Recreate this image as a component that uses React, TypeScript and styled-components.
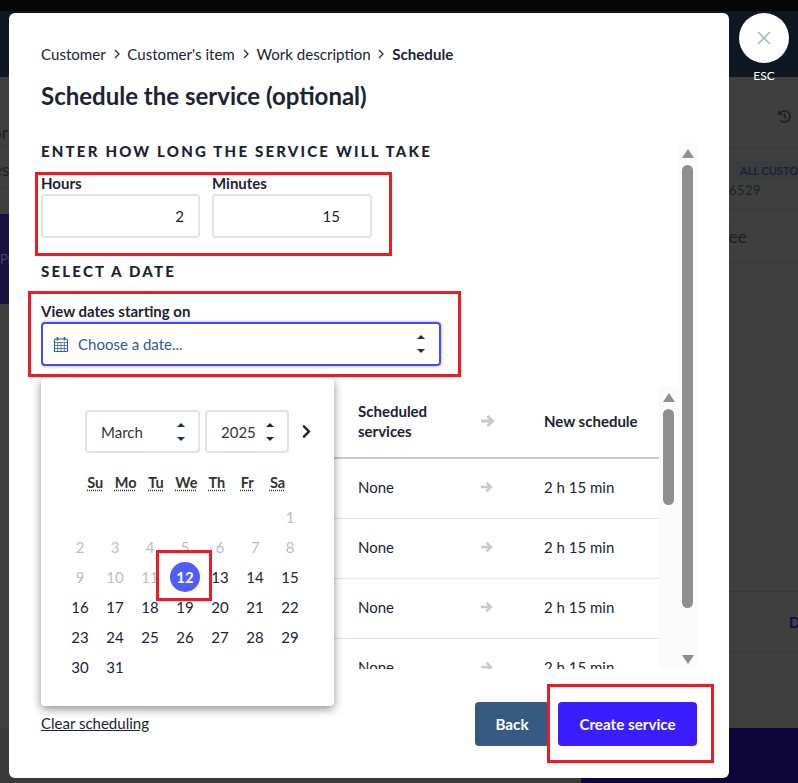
import styled, { createGlobalStyle } from "styled-components";
import { FaChevronRight, FaHistory } from "react-icons/fa";

const GlobalStyle = createGlobalStyle`
  * {
    box-sizing: border-box;
  }
  html, body {
    margin: 0;
    padding: 0;
    overflow: hidden;
    background: #3f3f3f;
    font-family: "Lato", "Liberation Sans", sans-serif;
    font-size: 15px;
    color: #1c2331;
  }
`;

const Page = styled.div`
  position: relative;
  width: 798px;
  height: 783px;
  display: flex;
  flex-direction: column;
  overflow: hidden;
`;
const TopStrip = styled.div`
  height: 11px;
  background: #050505;
`;
const NavBar = styled.div`
  height: 66px;
  background: #0f1723;
`;
const Backdrop = styled.div`
  flex: 1;
  display: flex;
  justify-content: space-between;
  background: #3f3f3f;
  color: #202020;
`;
const LeftPane = styled.div`
  width: 9px;
  display: flex;
  flex-direction: column;
  overflow: hidden;
`;
const RightPane = styled.div`
  width: 69px;
  display: flex;
  flex-direction: column;
  overflow: hidden;
`;
const PaneRow = styled.div<{ $h: number; $line?: boolean; $purple?: boolean; $drop?: number }>`
  height: ${(p) => p.$h}px;
  flex-shrink: 0;
  padding-top: ${(p) => p.$drop ?? 0}px;
  display: flex;
  align-items: center;
  white-space: nowrap;
  font-size: 17px;
  border-bottom: ${(p) => (p.$line ? "1px solid #383838" : "none")};
  background: ${(p) => (p.$purple ? "#1b1140" : "transparent")};
`;
const PaneText = styled.span<{ $shift: number; $muted?: boolean }>`
  margin-left: ${(p) => p.$shift}px;
  flex-shrink: 0;
  font-size: ${(p) => (p.$muted ? 13 : 17)}px;
  color: ${(p) => (p.$muted ? "#4a4560" : "#202020")};
`;
const HistoryMark = styled.span`
  margin-left: 49px;
  display: flex;
  align-items: center;
  gap: 6px;
  font-size: 13px;
`;
const CustomerCell = styled.div`
  font-size: 13px;
  line-height: 16px;
  letter-spacing: 0.5px;
  color: #222;
`;
const Chip = styled.div`
  margin: 0 0 1px 3px;
  width: 100px;
  height: 20px;
  padding-left: 8px;
  display: flex;
  align-items: center;
  background: #3a3c40;
  border-radius: 4px;
  font-size: 11px;
  letter-spacing: 0;
  font-weight: 700;
  color: #1c2233;
`;
const Link = styled.span`
  margin-left: 60px;
  font-size: 15px;
  font-weight: 700;
  color: #140b45;
`;
const BottomBand = styled.div`
  height: 55px;
  display: flex;
`;
const BottomGray = styled.div`
  width: 581px;
  background: #3a3a3a;
`;
const BottomNavy = styled.div`
  flex: 1;
  background: #0e063b;
`;

const Modal = styled.div`
  position: absolute;
  left: 9px;
  top: 13px;
  width: 720px;
  height: 765px;
  padding: 32px 32px 0;
  display: flex;
  flex-direction: column;
  background: #fff;
  border-radius: 6px;
`;
const Crumbs = styled.nav`
  height: 20px;
  padding-bottom: 2px;
  display: flex;
  align-items: center;
  gap: 6.8px;
  font-size: 15.1px;
`;
const Crumb = styled.span<{ $current?: boolean }>`
  font-weight: ${(p) => (p.$current ? 700 : 400)};
`;
const CrumbSep = styled.svg`
  width: 8px;
  height: 10px;
  fill: none;
  stroke: #1c2331;
  stroke-width: 1.2;
`;
const Title = styled.h1`
  margin: 15px 0 0;
  font-size: 24px;
  line-height: 32px;
  font-weight: 700;
`;
const Body = styled.div`
  margin-top: 31px;
  height: 526px;
  flex-shrink: 0;
  display: flex;
`;
const ScrollContent = styled.div`
  flex: 1;
  min-width: 0;
  overflow: hidden;
`;
const Heading = styled.h2<{ $gap?: number }>`
  margin: ${(p) => p.$gap ?? 0}px 0 0;
  font-size: 15px;
  line-height: 16px;
  font-weight: 900;
  letter-spacing: 2.2px;
  text-transform: uppercase;
`;
const DurationRow = styled.div`
  margin-top: 15px;
  display: flex;
  gap: 12px;
`;
const Field = styled.label<{ $w: number; $gap?: number }>`
  display: block;
  width: ${(p) => p.$w}px;
  margin-top: ${(p) => p.$gap ?? 0}px;
`;
const FieldLabel = styled.span`
  display: block;
  height: 20px;
  line-height: 18px;
  font-weight: 700;
`;
const NumberInput = styled.input<{ $endGap: number }>`
  width: 100%;
  height: 44px;
  padding: 0 ${(p) => p.$endGap}px 0 10px;
  border: 2px solid #e2e2ea;
  border-radius: 4px;
  outline: none;
  background: #fff;
  font: inherit;
  color: inherit;
  text-align: right;
`;
const DateSelect = styled.div`
  height: 44px;
  padding: 0 14px 0 10px;
  display: flex;
  align-items: center;
  border: 2px solid #4549ff;
  border-radius: 4px;
  box-shadow: 0 0 3px rgba(69, 73, 255, 0.6);
  color: #2f5a8c;
`;
const CalendarIcon = styled.svg`
  width: 16px;
  height: 17px;
  margin-right: 9px;
  fill: none;
  stroke: #3a5f8e;
`;
const Placeholder = styled.span`
  flex: 1;
`;
const Stepper = styled.span`
  display: flex;
  flex-direction: column;
  gap: 10px;
`;
const Triangle = styled.i<{ $large?: boolean; $down?: boolean }>`
  display: block;
  width: 0;
  height: 0;
  border-left: ${(p) => (p.$large ? 6.5 : 4)}px solid transparent;
  border-right: ${(p) => (p.$large ? 6.5 : 4)}px solid transparent;
  border-bottom: ${(p) => (p.$large ? 9 : 4)}px solid ${(p) => (p.$large ? "#8f8f8f" : "#222a38")};
  transform: ${(p) => (p.$down ? "rotate(180deg)" : "none")};
`;

const TableWrap = styled.div`
  margin-top: 20px;
  height: 283px;
  display: flex;
  overflow: hidden;
`;
const Table = styled.div`
  width: 618px;
  flex-shrink: 0;
`;
const Row = styled.div<{ $head?: boolean }>`
  height: ${(p) => (p.$head ? 73 : 60)}px;
  padding-bottom: ${(p) => (p.$head ? 2 : 3)}px;
  display: grid;
  grid-template-columns: 317px 123px 63px 1fr;
  align-items: center;
  line-height: 20px;
  font-weight: ${(p) => (p.$head ? 700 : 400)};
  border-bottom: ${(p) => (p.$head ? "2px solid #c9c9d3" : "1px solid #e4e4ee")};
`;
const ArrowIcon = styled.svg<{ $size: number }>`
  display: block;
  width: ${(p) => p.$size}px;
  height: ${(p) => p.$size}px;
  fill: none;
  stroke: #c9c9d2;
  stroke-width: 3;
`;
const ScrollTrack = styled.div<{ $pad: number }>`
  width: 19px;
  flex-shrink: 0;
  height: 100%;
  padding-top: ${(p) => p.$pad}px;
  display: flex;
  flex-direction: column;
  align-items: center;
  background: #fbfbfb;
`;
const ScrollThumb = styled.div<{ $h: number; $top: number }>`
  width: 11px;
  height: ${(p) => p.$h}px;
  margin: ${(p) => p.$top}px 0 0;
  border-radius: 6px;
  background: #8f8f8f;
`;
const TrackEnd = styled.div`
  margin-top: 47px;
`;

const Footer = styled.div`
  flex: 1;
  padding-top: 33px;
  display: flex;
  justify-content: space-between;
  align-items: flex-start;
`;
const ClearLink = styled.a`
  margin-top: 11px;
  line-height: 20px;
  color: inherit;
  text-decoration: underline;
`;
const Buttons = styled.div`
  display: flex;
  gap: 9px;
`;
const Button = styled.button<{ $primary?: boolean }>`
  width: ${(p) => (p.$primary ? 139 : 74)}px;
  height: 44px;
  border: none;
  border-radius: 4px;
  background: ${(p) => (p.$primary ? "#3a1eff" : "#375a82")};
  color: #fff;
  font: inherit;
  font-size: 15.2px;
  font-weight: 700;
`;

const Popover = styled.div`
  position: absolute;
  left: 32px;
  top: 365px;
  width: 293px;
  height: 328px;
  padding: 32px 0 0;
  background: #fff;
  border-radius: 4px;
  box-shadow: 0 3px 10px rgba(0, 0, 0, 0.45);
  &::before {
    content: "";
    position: absolute;
    left: 17px;
    top: -5px;
    width: 12px;
    height: 12px;
    background: #fff;
    transform: rotate(45deg);
    box-shadow: -1px -1px 2px rgba(0, 0, 0, 0.05);
  }
`;
const PickerRow = styled.div`
  margin-left: 44px;
  display: flex;
  align-items: center;
  gap: 5px;
`;
const PickerSelect = styled.div<{ $w: number }>`
  width: ${(p) => p.$w}px;
  height: 43px;
  padding: 0 13px 0 14px;
  display: flex;
  align-items: center;
  justify-content: space-between;
  border: 2px solid #e2e2ea;
  border-radius: 4px;
  color: #333;
`;
const NextMonth = styled.span`
  margin-left: 5px;
  display: flex;
  color: #1c2331;
`;
const Weekdays = styled.div`
  margin: 20px 0 0 39px;
  display: grid;
  grid-template-columns: repeat(7, 30.4px);
  line-height: 20px;
  text-align: center;
`;
const Weekday = styled.abbr`
  font-weight: 700;
  font-size: 14.5px;
  color: #333;
  text-decoration: underline dotted;
  text-underline-offset: 2px;
`;
const Days = styled.div`
  margin: 9px 0 0 21.5px;
  display: grid;
  grid-template-columns: repeat(7, 35px);
  grid-auto-rows: 30px;
`;
const Day = styled.span<{ $off?: boolean; $selected?: boolean }>`
  display: flex;
  align-items: center;
  justify-content: center;
  border-radius: 50%;
  width: ${(p) => (p.$selected ? "30px" : "auto")};
  justify-self: ${(p) => (p.$selected ? "center" : "stretch")};
  background: ${(p) => (p.$selected ? "#4f5cff" : "transparent")};
  color: ${(p) => (p.$selected ? "#fff" : p.$off ? "#bdbdbd" : "#1c2331")};
  font-weight: ${(p) => (p.$selected ? 700 : 400)};
`;

const CloseWrap = styled.div`
  position: absolute;
  left: 739px;
  top: 13px;
  width: 50px;
  display: flex;
  flex-direction: column;
  align-items: center;
`;
const CloseButton = styled.button`
  width: 50px;
  height: 50px;
  padding: 0;
  display: flex;
  align-items: center;
  justify-content: center;
  border: none;
  border-radius: 50%;
  background: #fff;
`;
const CloseIcon = styled.svg`
  width: 16px;
  height: 16px;
  stroke: #a9bbcb;
  stroke-width: 1.6;
`;
const EscLabel = styled.span`
  margin-top: 6px;
  font-size: 12px;
  line-height: 14px;
  color: #fff;
`;

const Callout = styled.div<{ $x: number; $y: number; $w: number; $h: number }>`
  position: absolute;
  left: ${(p) => p.$x}px;
  top: ${(p) => p.$y}px;
  width: ${(p) => p.$w}px;
  height: ${(p) => p.$h}px;
  border: 3px solid #ed1c24;
  pointer-events: none;
`;

const WEEKDAYS = ["Su", "Mo", "Tu", "We", "Th", "Fr", "Sa"];
const DAYS = Array.from({ length: 31 }, (_, i) => i + 1);

function Steps() {
  return (
    <Stepper>
      <Triangle />
      <Triangle $down />
    </Stepper>
  );
}

function Arrow({ size }: { size: number }) {
  return (
    <ArrowIcon $size={size} viewBox="0 0 14 14">
      <path d="M0 7h11M6.5 2l5 5-5 5" />
    </ArrowIcon>
  );
}

function App() {
  return (
    <Page>
      <GlobalStyle />
      <TopStrip />
      <NavBar />
      <Backdrop>
        <LeftPane>
          <PaneRow $h={69} $line $drop={42}>
            <PaneText $shift={-8}>or</PaneText>
          </PaneRow>
          <PaneRow $h={42} $line $drop={6}>
            <PaneText $shift={-7}>es</PaneText>
          </PaneRow>
          <PaneRow $h={26} />
          <PaneRow $h={90} $purple>
            <PaneText $shift={0} $muted>Pr</PaneText>
          </PaneRow>
        </LeftPane>
        <RightPane>
          <PaneRow $h={72} $line $drop={8}>
            <HistoryMark>
              <FaHistory size={13} />I
            </HistoryMark>
          </PaneRow>
          <PaneRow $h={61} $line>
            <CustomerCell>
              <Chip>ALL CUSTOMERS</Chip>
              6529
            </CustomerCell>
          </PaneRow>
          <PaneRow $h={53} $line>
            <PaneText $shift={-9}>Fee</PaneText>
          </PaneRow>
          <PaneRow $h={329} $line />
          <PaneRow $h={61} $line>
            <Link>D</Link>
          </PaneRow>
        </RightPane>
      </Backdrop>
      <BottomBand>
        <BottomGray />
        <BottomNavy />
      </BottomBand>

      <Modal>
        <Crumbs>
          <Crumb>Customer</Crumb>
          <CrumbSep viewBox="0 0 8 10">
            <path d="M2 1l4 4-4 4" />
          </CrumbSep>
          <Crumb>Customer's item</Crumb>
          <CrumbSep viewBox="0 0 8 10">
            <path d="M2 1l4 4-4 4" />
          </CrumbSep>
          <Crumb>Work description</Crumb>
          <CrumbSep viewBox="0 0 8 10">
            <path d="M2 1l4 4-4 4" />
          </CrumbSep>
          <Crumb $current>Schedule</Crumb>
        </Crumbs>
        <Title>Schedule the service (optional)</Title>

        <Body>
          <ScrollContent>
            <Heading>Enter how long the service will take</Heading>
            <DurationRow>
              <Field $w={159}>
                <FieldLabel>Hours</FieldLabel>
                <NumberInput $endGap={14} defaultValue="2" />
              </Field>
              <Field $w={160}>
                <FieldLabel>Minutes</FieldLabel>
                <NumberInput $endGap={30} defaultValue="15" />
              </Field>
            </DurationRow>
            <Heading $gap={25}>Select a date</Heading>
            <Field $w={400} $gap={23}>
              <FieldLabel>View dates starting on</FieldLabel>
              <DateSelect>
                <CalendarIcon viewBox="0 0 16 17">
                  <rect x="1.5" y="3" width="13" height="12.5" rx="1" strokeWidth="1.2" />
                  <path d="M1.5 6.5h13M1.5 9.5h13M1.5 12.5h13M4.7 6.5v9M8 6.5v9M11.3 6.5v9" strokeWidth="0.8" />
                  <path d="M4.5 1v3.5M11.5 1v3.5" strokeWidth="1.6" />
                </CalendarIcon>
                <Placeholder>Choose a date...</Placeholder>
                <Steps />
              </DateSelect>
            </Field>
            <TableWrap>
              <Table>
                <Row $head>
                  <span />
                  <span>
                    Scheduled
                    <br />
                    services
                  </span>
                  <Arrow size={14} />
                  <span>New schedule</span>
                </Row>
                {[0, 1, 2, 3].map((i) => (
                  <Row key={i}>
                    <span />
                    <span>None</span>
                    <Arrow size={12} />
                    <span>2 h 15 min</span>
                  </Row>
                ))}
              </Table>
              <ScrollTrack $pad={7}>
                <Triangle $large />
                <ScrollThumb $h={96} $top={7} />
              </ScrollTrack>
            </TableWrap>
          </ScrollContent>
          <ScrollTrack $pad={6}>
            <Triangle $large />
            <ScrollThumb $h={443} $top={7} />
            <TrackEnd>
              <Triangle $large $down />
            </TrackEnd>
          </ScrollTrack>
        </Body>

        <Footer>
          <ClearLink>Clear scheduling</ClearLink>
          <Buttons>
            <Button>Back</Button>
            <Button $primary>Create service</Button>
          </Buttons>
        </Footer>

        <Popover>
          <PickerRow>
            <PickerSelect $w={115}>
              March
              <Steps />
            </PickerSelect>
            <PickerSelect $w={84}>
              2025
              <Steps />
            </PickerSelect>
            <NextMonth>
              <FaChevronRight size={15} />
            </NextMonth>
          </PickerRow>
          <Weekdays>
            {WEEKDAYS.map((d) => (
              <Weekday key={d}>{d}</Weekday>
            ))}
          </Weekdays>
          <Days>
            {Array.from({ length: 6 }, (_, i) => (
              <span key={i} />
            ))}
            {DAYS.map((d) => (
              <Day key={d} $off={d < 12} $selected={d === 12}>
                {d}
              </Day>
            ))}
          </Days>
        </Popover>
      </Modal>

      <CloseWrap>
        <CloseButton aria-label="Close">
          <CloseIcon viewBox="0 0 16 16">
            <path d="M2 2l12 12M14 2L2 14" />
          </CloseIcon>
        </CloseButton>
        <EscLabel>ESC</EscLabel>
      </CloseWrap>

      <Callout $x={35} $y={172} $w={357} $h={84} />
      <Callout $x={28} $y={291} $w={433} $h={86} />
      <Callout $x={156} $y={550} $w={56} $h={51} />
      <Callout $x={547} $y={684} $w={167} $h={79} />
    </Page>
  );
}

export default App;
